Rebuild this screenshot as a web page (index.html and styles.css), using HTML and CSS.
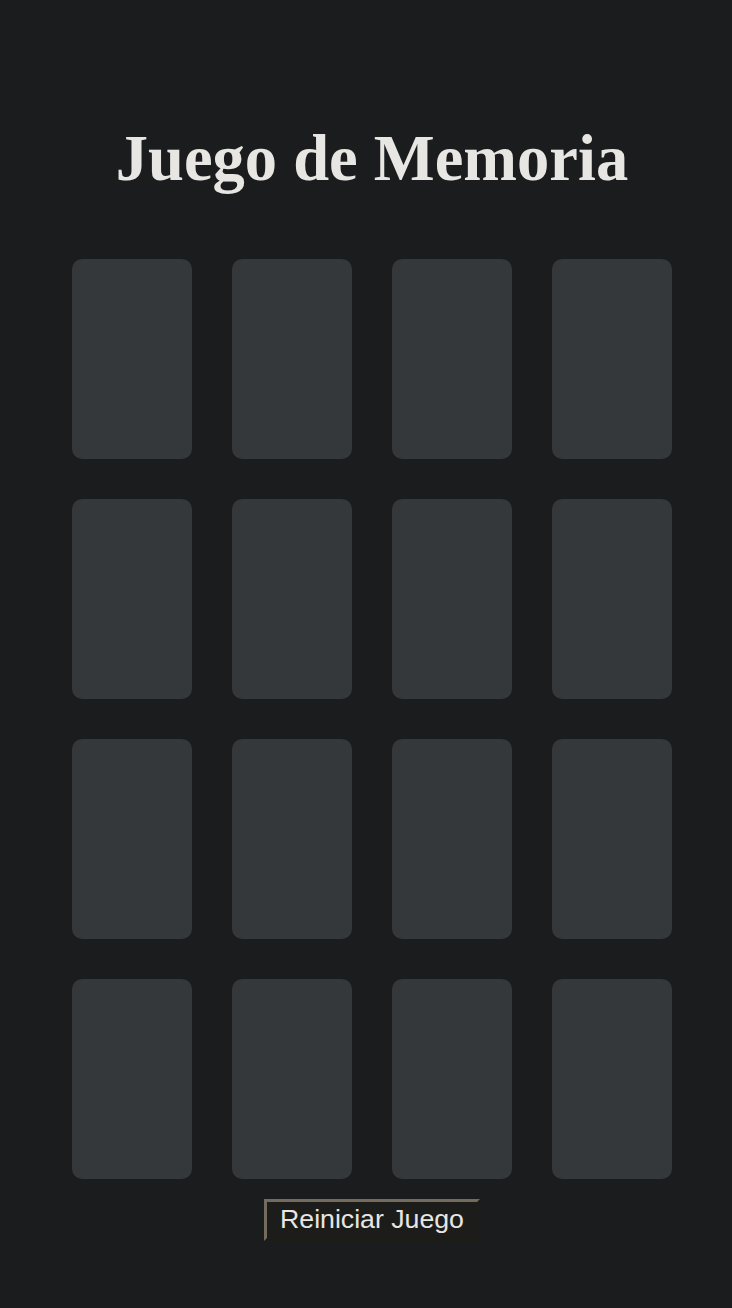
FILE: index.html
```html
<!DOCTYPE html>
<html lang="es">
<head>
    <meta charset="UTF-8">
    <title>Juego de Memoria</title>
    <link rel="stylesheet" href="styles.css">
</head>
<body>
    <h1>Juego de Memoria</h1>
    <div class="board">
        <div class="card"></div>
        <div class="card"></div>
        <div class="card"></div>
        <div class="card"></div>
        <div class="card"></div>
        <div class="card"></div>
        <div class="card"></div>
        <div class="card"></div>
        <div class="card"></div>
        <div class="card"></div>
        <div class="card"></div>
        <div class="card"></div>
        <div class="card"></div>
        <div class="card"></div>
        <div class="card"></div>
        <div class="card"></div>
    </div>
    <button id="resetButton">Reiniciar Juego</button>
</body>
</html>
```

FILE: styles.css
```css
body {
    margin: 0;
    padding: 0 0 0 12px;
    background: #1b1c1e;
    color: #e8e6e3;
    display: flex;
    flex-direction: column;
    align-items: center;
    font-family: "Liberation Serif", serif;
}

h1 {
    font-size: 64.5px;
    margin: 127px 0 67.5px;
    line-height: 1;
}

.board {
    display: grid;
    grid-template-columns: repeat(4, 120px);
    gap: 40px;
}

.card {
    height: 200px;
    background: #35383a;
    border-radius: 10px;
}

button {
    margin-top: 20px;
    font-family: "Liberation Sans", sans-serif;
    font-size: 26.7px;
    color: #e8e6e3;
    background: #1c1c1a;
    border: 3px outset #736b5e;
    padding: 2px 13px 3px;
}
```
